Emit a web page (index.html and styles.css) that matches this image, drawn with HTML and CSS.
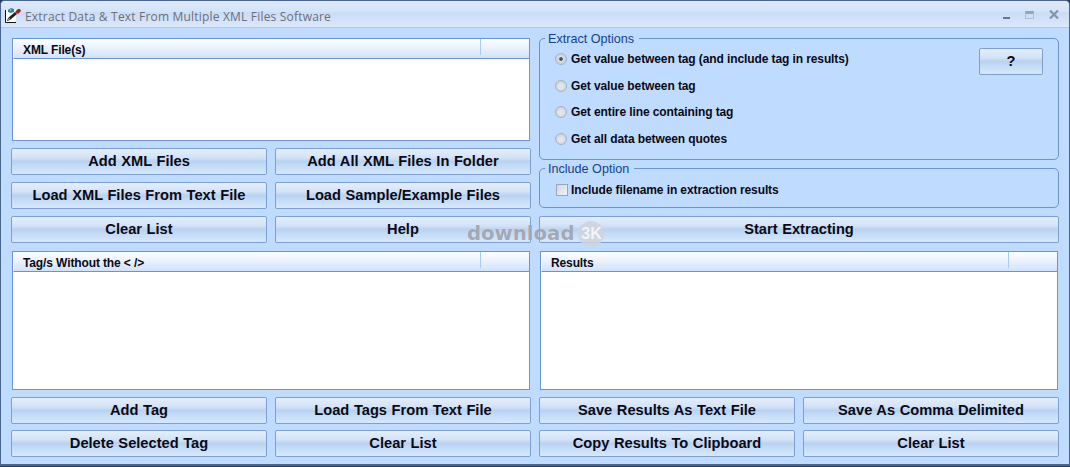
FILE: index.html
```html
<!DOCTYPE html>
<html lang="en">
<head>
    <meta charset="UTF-8">
    <title>Extract Data &amp; Text From Multiple XML Files Software</title>
    <link rel="stylesheet" href="styles.css">
</head>
<body>
    <div class="window">
        <div class="titlebar">
            <svg class="app-icon" viewBox="0 0 16 16">
                <path d="M1 3h10v12H1z" fill="#fff"/>
                <path d="M.5 3v12.500h10.500" stroke="#111" fill="none"/>
                <path d="M2 14l1-3 7-6 2 2-7 6z" fill="#222"/>
                <path d="M3 13l1-2 1 1z" fill="#fff"/>
                <path d="M10 5l3-3h2l1 2-3 3z" fill="#a81c1c"/>
                <path d="M3 3l3-2 3 1 0 3-3 1-3-1z" fill="#2c8796"/>
                <path d="M5 2l2 1-2 1z" fill="#8fd0a8"/>
            </svg>
            <span class="title">Extract Data &amp; Text From Multiple XML Files Software</span>
            <div class="window-controls">
                <span class="ctl-min"></span>
                <span class="ctl-max"></span>
                <svg class="ctl-close" viewBox="0 0 10 9">
                    <path d="M1 .5l8 8M9 .5l-8 8" stroke="#8494a9" stroke-width="2.200" fill="none"/>
                </svg>
            </div>
        </div>

        <div class="client">
            <div class="top">
                <div class="column">
                    <div class="list list-xml">
                        <div class="list-header"><span class="list-head-cell">XML File(s)</span></div>
                    </div>
                    <div class="button-grid">
                        <button class="button">Add XML Files</button>
                        <button class="button">Add All XML Files In Folder</button>
                        <button class="button">Load XML Files From Text File</button>
                        <button class="button">Load Sample/Example Files</button>
                        <button class="button">Clear List</button>
                        <button class="button">Help</button>
                    </div>
                </div>
                <div class="column">
                    <fieldset class="group group-extract">
                        <legend>Extract Options</legend>
                        <div class="options">
                            <label class="option"><span class="radio checked"></span>Get value between tag (and include tag in results)</label>
                            <label class="option"><span class="radio"></span>Get value between tag</label>
                            <label class="option"><span class="radio"></span>Get entire line containing tag</label>
                            <label class="option"><span class="radio"></span>Get all data between quotes</label>
                        </div>
                        <button class="button button-help">?</button>
                    </fieldset>
                    <fieldset class="group group-include">
                        <legend>Include Option</legend>
                        <label class="option option-include"><span class="checkbox"></span>Include filename in extraction results</label>
                    </fieldset>
                    <button class="button button-start">Start Extracting</button>
                </div>
            </div>

            <div class="middle">
                <div class="list">
                    <div class="list-header"><span class="list-head-cell">Tag/s Without the &lt; /&gt;</span></div>
                </div>
                <div class="list">
                    <div class="list-header"><span class="list-head-cell">Results</span></div>
                </div>
            </div>

            <div class="bottom">
                <button class="button">Add Tag</button>
                <button class="button">Load Tags From Text File</button>
                <button class="button">Save Results As Text File</button>
                <button class="button">Save As Comma Delimited</button>
                <button class="button">Delete Selected Tag</button>
                <button class="button">Clear List</button>
                <button class="button">Copy Results To Clipboard</button>
                <button class="button">Clear List</button>
            </div>
        </div>

        <div class="watermark">
            <span class="watermark-text">download</span>
            <span class="watermark-badge">3K</span>
        </div>
    </div>
</body>
</html>
```

FILE: styles.css
```css
* {
    margin: 0;
    padding: 0;
    box-sizing: border-box;
}

:root {
    --client-bg: #bfdbff;
    --border-blue: #6b93cf;
    --text-dark: #0a0a14;
    --legend-blue: #15428b;
}

html, body {
    width: 1070px;
    height: 467px;
    overflow: hidden;
}

body {
    font-family: 'Liberation Sans', Arial, sans-serif;
    color: var(--text-dark);
    background: #2c3e5e;
}

.window {
    position: relative;
    width: 1070px;
    height: 466px;
    background: var(--client-bg);
    border: 1px solid #47658f;
    border-bottom-width: 2px;
    border-radius: 5px 5px 0 0;
    overflow: hidden;
}

.titlebar {
    height: 27px;
    display: flex;
    align-items: center;
    padding: 4px 0 0 4px;
    background: linear-gradient(#dfeafa 0, #d4e3f8 40%, #c9dcf6 45%, #dbe8f9 100%);
    border-bottom: 1px solid #a9caf0;
}

.app-icon {
    width: 16px;
    height: 16px;
    margin: 0 4px 2px 0;
    flex: none;
}

.title {
    font-family: 'Open Sans', sans-serif;
    font-size: 12px;
    letter-spacing: 0.19px;
    color: #6b6f7c;
}

.window-controls {
    margin: 0 10px 3px auto;
    display: flex;
    align-items: center;
    gap: 15px;
}

.ctl-min {
    width: 7px;
    height: 2px;
    margin-top: 6px;
    background: #68778c;
}

.ctl-max {
    width: 9px;
    height: 8px;
    border: 1px solid #b4bfce;
    border-top: 3px solid #97a5b8;
}

.ctl-close {
    width: 10px;
    height: 9px;
}

.client {
    padding: 10px 10px 0;
}

.top {
    display: grid;
    grid-template-columns: 520px 520px;
    gap: 8px;
}

.column {
    display: flex;
    flex-direction: column;
}

.list {
    background: #fff;
    border: 1px solid var(--border-blue);
    margin: 0 1px;
}

.list-xml {
    height: 103px;
}

.list-header {
    height: 20px;
    display: flex;
    background: linear-gradient(#ffffff, #d0e2fb);
    border-bottom: 1px solid var(--border-blue);
    border-left: 1px solid #fff;
    font-size: 12px;
    font-weight: bold;
    letter-spacing: -0.12px;
}

.list-head-cell {
    width: 467px;
    padding: 4px 0 0 9px;
    line-height: 15px;
    border-right: 1px solid #a9cbf3;
    margin-bottom: 3px;
}

.button-grid {
    display: grid;
    grid-template-columns: 256px 256px;
    gap: 7px 8px;
    margin-top: 7px;
}

.button {
    height: 27px;
    padding-bottom: 2px;
    font-family: inherit;
    font-size: 14.67px;
    font-weight: bold;
    word-spacing: 0.5px;
    color: var(--text-dark);
    border: 1px solid #7f9fd0;
    border-radius: 2px;
    background: linear-gradient(#e4eefb 0, #d3e2f6 35%, #b9d2f1 50%, #c3daf6 65%, #d5e8fd 100%);
}

.group {
    border: 1px solid var(--border-blue);
    border-radius: 5px;
    padding: 0 8px;
    font-size: 12px;
}

.group legend {
    margin-left: -3px;
    padding: 2px 5px 0 3px;
    font-size: 12.6px;
    line-height: 16px;
    color: var(--legend-blue);
}

.group-extract {
    position: relative;
    height: 131px;
    margin-top: -9px;
}

.group-include {
    height: 49px;
    margin-top: -1px;
}

.options {
    display: flex;
    flex-direction: column;
    gap: 12.67px;
    padding: 5px 0 0 7px;
}

.option {
    display: flex;
    align-items: center;
    gap: 4px;
    height: 14px;
    font-weight: bold;
    font-size: 12px;
    letter-spacing: -0.1px;
}

.option-include {
    margin-top: 6px;
    gap: 3px;
}

.radio {
    width: 12px;
    height: 12px;
    border-radius: 50%;
    border: 1px solid #aab2bf;
    background: radial-gradient(circle at 50% 55%, #e2e5eb 30%, #bcc3cf 100%);
}

.radio.checked {
    background: radial-gradient(circle, #46546a 0 20%, #dadee6 32%, #bcc3cf 100%);
}

.checkbox {
    width: 12px;
    height: 12px;
    margin-left: 8px;
    border: 1px solid #9aa5b5;
    background: linear-gradient(135deg, #d3d8e0, #f0f2f6);
}

.button-help {
    position: absolute;
    top: 1px;
    right: 15px;
    width: 64px;
}

.button-start {
    width: 520px;
    margin-top: 8px;
}

.middle {
    display: grid;
    grid-template-columns: 520px 520px;
    gap: 8px;
    margin-top: 8px;
}

.middle .list {
    height: 139px;
}

.bottom {
    display: grid;
    grid-template-columns: repeat(4, 256px);
    gap: 6px 8px;
    margin-top: 7px;
}

/* the download3k stamp sits over the buttons */
.watermark {
    position: absolute;
    left: 466px;
    top: 220px;
    display: flex;
    align-items: center;
    gap: 4px;
    pointer-events: none;
    color: rgba(140, 146, 156, 0.75);
}

.watermark-text {
    font-family: 'DejaVu Sans', sans-serif;
    font-size: 19.7px;
    font-weight: bold;
    line-height: 26px;
    text-shadow: 0 0 1px rgba(255, 255, 255, 0.6);
}

.watermark-badge {
    width: 26px;
    height: 26px;
    border-radius: 50%;
    background: rgba(206, 212, 222, 0.85);
    color: rgba(245, 247, 250, 0.95);
    font-size: 16px;
    font-weight: bold;
    line-height: 26px;
    text-align: center;
}
```
